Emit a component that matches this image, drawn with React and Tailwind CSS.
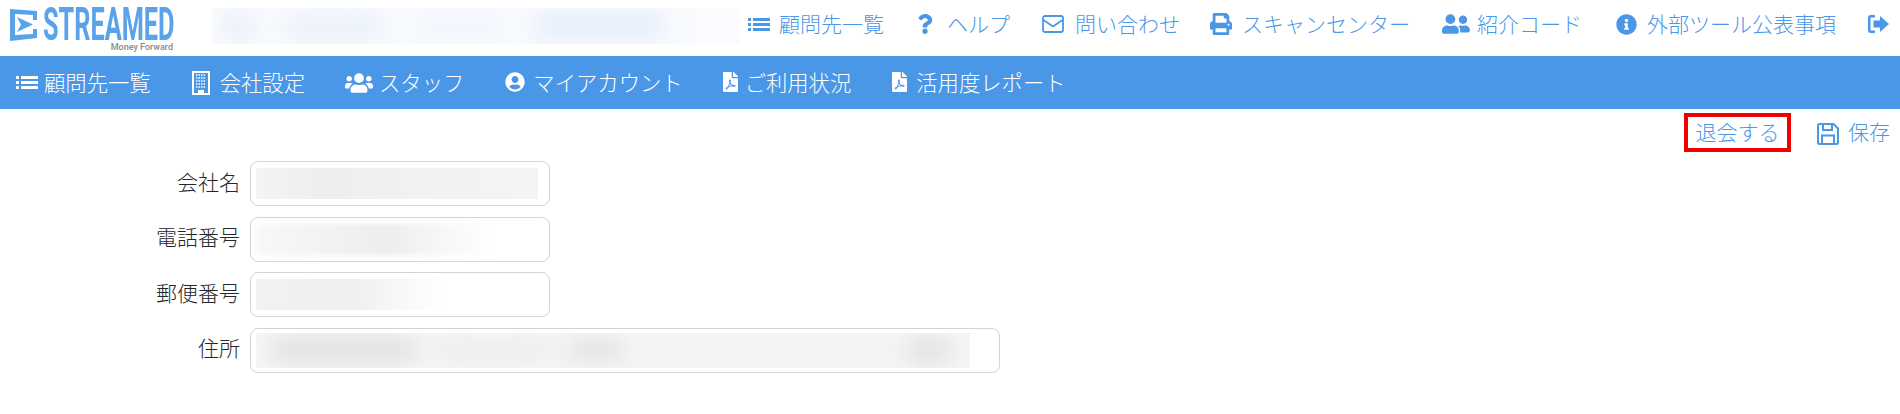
import React from 'react';
import { FaQuestion, FaPrint, FaUserFriends, FaInfoCircle, FaUsers, FaUserCircle, FaFilePdf } from 'react-icons/fa';

const ListIcon = () => (
  <svg width="22" height="13" viewBox="0 0 22 13" fill="currentColor">
    <rect x="0" y="0" width="3" height="3" />
    <rect x="0" y="5" width="3" height="3" />
    <rect x="0" y="10" width="3" height="3" />
    <rect x="5" y="0" width="17" height="3" />
    <rect x="5" y="5" width="17" height="3" />
    <rect x="5" y="10" width="17" height="3" />
  </svg>
);

const EnvelopeIcon = () => (
  <svg width="22" height="18" viewBox="0 0 22 18" fill="none" stroke="currentColor" strokeWidth="1.8">
    <rect x="1" y="1" width="20" height="16" rx="2" />
    <path d="M1.5 5 L11 11.5 L20.5 5" />
  </svg>
);

const BuildingIcon = () => (
  <svg width="18" height="24" viewBox="0 0 18 24">
    <rect x="1" y="1" width="16" height="22" fill="none" stroke="currentColor" strokeWidth="2" />
    <path d="M4 4 H14 M4 7 H14 M4 10 H14 M4 13 H14 M4 16 H14" stroke="currentColor" strokeWidth="1.5" strokeDasharray="1.5 1" />
    <rect x="6" y="19" width="6" height="4" fill="currentColor" />
  </svg>
);

const SaveIcon = () => (
  <svg width="22" height="22" viewBox="0 0 22 22" fill="none" stroke="currentColor" strokeWidth="2">
    <path d="M2.5 1 H16.5 L21 5.5 V19.5 A1.5 1.5 0 0 1 19.5 21 H2.5 A1.5 1.5 0 0 1 1 19.5 V2.5 A1.5 1.5 0 0 1 2.5 1 Z" />
    <path d="M6 1.5 V7 H15 V1.5" />
    <path d="M5 20.5 V12.5 H17 V20.5" />
  </svg>
);

const Logo = () => (
  <div className="relative w-[173px] h-14 shrink-0">
    <svg className="absolute left-[10px] top-2" width="27" height="33" viewBox="0 0 27 33">
      <path d="M0 1 L27 3 V12 L23 12 V7 L5 6 V27 L23 26 V21 L27 21 V30 L0 33 Z" fill="#5aa3ea" />
      <path d="M7 9 L23 16.5 L7 24 L11 16.5 Z" fill="#5aa3ea" />
    </svg>
    <span className="absolute left-[43px] top-[12px] scale-y-[1.82] font-['Roboto',sans-serif] font-bold text-[25.3px] leading-[25px] text-[#5aa3ea] whitespace-nowrap">STREAMED</span>
    <span className="absolute right-0 top-[43px] text-[9px] leading-[9px] font-['Roboto',sans-serif] font-medium text-[#8a8a8a] whitespace-nowrap">Money Forward</span>
  </div>
);

const MenuLink = ({ icon, label, iconWidth, gap }) => (
  <a className={`flex items-center ${gap}`}>
    <span className={`flex justify-center ${iconWidth}`}>{icon}</span>
    <span className="pb-[2px]">{label}</span>
  </a>
);

const Blur = ({ className, fill, blobs }) => (
  <div className={`flex items-center overflow-hidden ${className} ${fill}`}>
    {blobs}
  </div>
);

const Field = ({ label, wide, blur }) => (
  <div className="flex items-center">
    <label className="w-[240px] pb-[5px] text-right text-[21px] text-[#23272b]">{label}</label>
    <div className={`ml-[10px] h-[45px] rounded-lg border border-[#ced4da] bg-white pl-[5px] flex items-center ${wide ? 'w-[750px]' : 'w-[300px]'}`}>
      {blur}
    </div>
  </div>
);

export default function App() {
  return (
    <div className="min-h-screen bg-white font-['Noto_Sans_CJK_JP','Noto_Sans',sans-serif] font-light text-[21px] leading-none text-[#4a97e8]">
      {/* top bar */}
      <header className="flex h-14 items-start">
        <Logo />
        <Blur
          className="ml-[39px] mt-2 h-[36px] w-[528px] shrink-0 gap-[30px] pl-3"
          fill="bg-[#f9fbfe]"
          blobs={
            <>
              <span className="h-6 w-[30px] rounded-full bg-[#e2ebf8] blur-md" />
              <span className="h-5 w-[100px] rounded-full bg-[#e6eef9] blur-md" />
              <span className="h-5 w-[90px] rounded-full bg-[#f0f4fb] blur-md" />
              <span className="h-6 w-[130px] rounded-full bg-[#e2ebf8] blur-md" />
            </>
          }
        />
        <nav className="ml-2 flex h-12 flex-1 items-center whitespace-nowrap">
          <MenuLink icon={<ListIcon />} label="顧問先一覧" iconWidth="w-[22px]" gap="gap-[9px]" />
          <div className="ml-[33px]"><MenuLink icon={<FaQuestion size={20} />} label="ヘルプ" iconWidth="w-[16px]" gap="gap-[14px]" /></div>
          <div className="ml-[32px]"><MenuLink icon={<EnvelopeIcon />} label="問い合わせ" iconWidth="w-[22px]" gap="gap-[11px]" /></div>
          <div className="ml-[30px]"><MenuLink icon={<FaPrint size={22} />} label="スキャンセンター" iconWidth="w-[22px]" gap="gap-[10px]" /></div>
          <div className="ml-[32px]"><MenuLink icon={<FaUserFriends size={28} />} label="紹介コード" iconWidth="w-[28px]" gap="gap-[7px]" /></div>
          <div className="ml-[34px]"><MenuLink icon={<FaInfoCircle size={21} />} label="外部ツール公表事項" iconWidth="w-[21px]" gap="gap-[10px]" /></div>
          <svg className="ml-[32px]" width="21" height="18" viewBox="0 0 21 18" fill="#4a97e8">
            <path d="M7 0 H2.5 A2.5 2.5 0 0 0 0 2.5 V15.5 A2.5 2.5 0 0 0 2.5 18 H7 V15.5 H2.5 V2.5 H7 Z" />
            <path d="M12 1 L21 9 L12 17 V12.5 H5.5 V5.5 H12 Z" />
          </svg>
        </nav>
      </header>

      {/* blue menu */}
      <nav className="flex h-[53px] items-center bg-[#4a97e8] pl-4 text-[21.33px] text-white whitespace-nowrap">
        <MenuLink icon={<ListIcon />} label="顧問先一覧" iconWidth="w-[22px]" gap="gap-[6px]" />
        <div className="ml-[41px]"><MenuLink icon={<BuildingIcon />} label="会社設定" iconWidth="w-[18px]" gap="gap-[10px]" /></div>
        <div className="ml-[40px]"><MenuLink icon={<FaUsers size={28} />} label="スタッフ" iconWidth="w-[28px]" gap="gap-[6px]" /></div>
        <div className="ml-[41px]"><MenuLink icon={<FaUserCircle size={20} />} label="マイアカウント" iconWidth="w-[20px]" gap="gap-[8px]" /></div>
        <div className="ml-[39px]"><MenuLink icon={<FaFilePdf size={20} />} label="ご利用状況" iconWidth="w-[17px]" gap="gap-[6px]" /></div>
        <div className="ml-[40px]"><MenuLink icon={<FaFilePdf size={20} />} label="活用度レポート" iconWidth="w-[17px]" gap="gap-[8px]" /></div>
      </nav>

      {/* actions */}
      <div className="flex h-[52px] items-start justify-end pr-[10px] pt-1">
        <a className="flex h-[39px] w-[107px] items-center justify-center border-4 border-[#f00000] pb-[2px]">退会する</a>
        <span className="ml-[26px] flex h-[39px] items-center pt-[3px]"><SaveIcon /></span>
        <span className="ml-[9px] flex h-[39px] items-center pb-[2px]">保存</span>
      </div>

      {/* form */}
      <form className="flex flex-col gap-[10.5px]">
        <Field
          label="会社名"
          blur={<div className="h-[31px] w-[282px] bg-[linear-gradient(90deg,#f4f4f4,#eeeeee_25%,#f2f2f2_60%,#f4f4f4)]" />}
        />
        <Field
          label="電話番号"
          blur={<div className="h-[31px] w-[240px] bg-[linear-gradient(90deg,#f8f8f8,#ededed_55%,#f6f6f6_75%,#ffffff)] blur-[2px]" />}
        />
        <Field
          label="郵便番号"
          blur={<div className="h-[31px] w-[190px] bg-[linear-gradient(90deg,#f2f2f2,#efefef_50%,#f8f8f8_75%,#ffffff)]" />}
        />
        <Field
          label="住所"
          wide
          blur={
            <Blur
              className="h-[35px] w-[714px] gap-[14px] pl-3"
              fill="bg-[#f7f7f7]"
              blobs={
                <>
                  <span className="h-6 w-[150px] shrink-0 rounded-full bg-[#dcdedf] blur-md" />
                  <span className="h-5 w-[120px] shrink-0 rounded-full bg-[#e9eaea] blur-md" />
                  <span className="h-6 w-[60px] shrink-0 rounded-full bg-[#dfe1e2] blur-md" />
                  <span className="h-5 w-[250px] shrink-0 rounded-full bg-[#eff0f0] blur-md" />
                  <span className="h-6 w-[50px] shrink-0 rounded-full bg-[#dcdedf] blur-md" />
                </>
              }
            />
          }
        />
      </form>
    </div>
  );
}
